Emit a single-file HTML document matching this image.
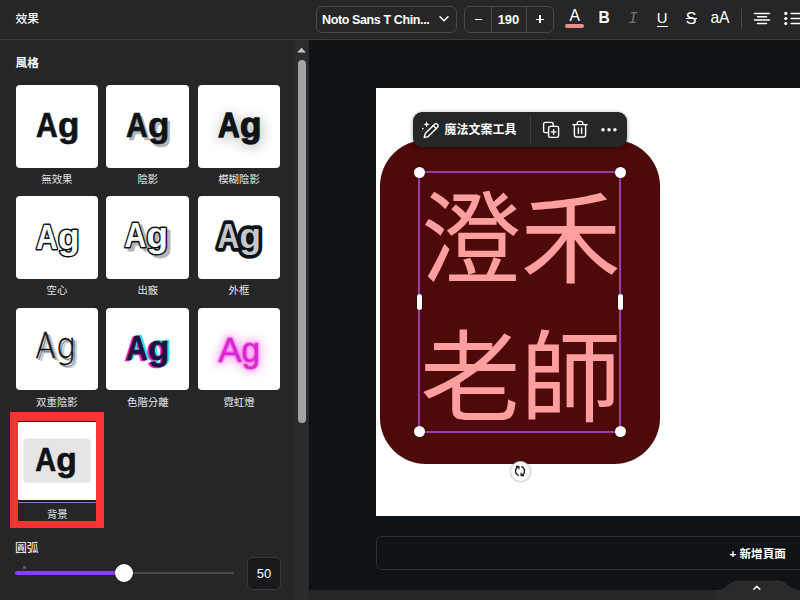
<!DOCTYPE html>
<html lang="zh-Hant">
<head>
<meta charset="utf-8">
<title>效果</title>
<style>
*{box-sizing:border-box;margin:0;padding:0}
html,body{width:800px;height:600px;overflow:hidden;background:#0e1318}
body{position:relative;font-family:"Liberation Sans","Noto Sans CJK TC",sans-serif;color:#fff}
.abs{position:absolute}
#panel{left:0;top:0;width:309px;height:600px;background:#252627}
#phead{left:0;top:0;width:309px;height:40px;border-bottom:1px solid #3a3b3d}
#phead span{position:absolute;left:15.5px;top:9px;font-size:11.8px;line-height:20px;font-weight:500;color:#fff}
.lbl{font-size:12px;line-height:16px;color:#fff;font-weight:500}
.tile{background:#fff;border-radius:4px;overflow:hidden}
.cap{width:110px;text-align:center;font-size:10.4px;line-height:14px;color:#e4e5e6}
.agb{font-family:"Liberation Sans",sans-serif;font-weight:700;font-size:35px}
.agb4{font-family:"Liberation Sans",sans-serif;font-weight:700;font-size:33.5px}
.agt{font-family:"DejaVu Sans","Liberation Sans",sans-serif;font-weight:200;font-size:35.3px}
.agn{font-family:"Liberation Sans",sans-serif;font-weight:400;font-size:36px}
#strack{left:295px;top:40px;width:13px;height:560px;background:#2b2c2e}
#sbar{left:297.5px;top:60px;width:8px;height:363px;background:#a3a3a3;border-radius:4px}
#tbar{left:308px;top:0;width:492px;height:40px;background:#252627;border-bottom:1px solid #3a3b3d}
.tb{position:absolute;top:5.5px;height:27px;border:1px solid #48494b;border-radius:6px}
.ti{position:absolute;text-align:center;color:#fff;font-family:"Liberation Sans",sans-serif;white-space:nowrap}
#page{left:376px;top:88px;width:424px;height:427.5px;background:#fff}
#shape{left:380px;top:140px;width:280px;height:324px;background:#4d0a08;border-radius:46px}
.big{position:absolute;left:420px;width:201px;font-size:100.5px;line-height:100px;color:#ff9e9e;white-space:nowrap;font-family:"Noto Sans CJK TC",sans-serif;font-weight:400;text-align:center}
#sel{left:418.3px;top:171px;width:203px;height:262px;border:2.3px solid #9a3cac}
.h{position:absolute;width:11px;height:11px;border-radius:50%;background:#fff;box-shadow:0 0 2px rgba(0,0,0,.5)}
.hp{position:absolute;width:5.6px;height:16px;border-radius:3px;background:#fff;box-shadow:0 0 2px rgba(0,0,0,.5)}
#ftb{left:413px;top:112px;width:214px;height:34.5px;background:#252627;border-radius:9px;box-shadow:0 1px 4px rgba(0,0,0,.4)}
#addbar{left:376px;top:536px;width:440px;height:34px;border:1px solid #2a3036;border-radius:6px;background:#0e1318}
#addbar span{position:absolute;left:352.5px;top:8px;font-size:11.6px;line-height:18px;font-weight:700;color:#fff;white-space:nowrap}
#bbar{left:309px;top:590px;width:491px;height:10px;background:#252627}
</style>
</head>
<body>
<!-- canvas area -->
<div class="abs" id="page"></div>
<div class="abs" id="shape"></div>
<div class="big" style="top:181px">澄禾</div>
<div class="big" style="top:320px">老師</div>
<div class="abs" id="sel"></div>
<div class="h" style="left:414px;top:166.5px"></div>
<div class="h" style="left:615px;top:166.5px"></div>
<div class="h" style="left:414px;top:426px"></div>
<div class="h" style="left:615px;top:426px"></div>
<div class="hp" style="left:416.7px;top:293.7px"></div>
<div class="hp" style="left:617.8px;top:293.7px"></div>

<!-- floating toolbar -->
<div class="abs" id="ftb">
  <svg class="abs" style="left:8px;top:8px" width="20" height="20" viewBox="0 0 20 20">
    <g fill="none" stroke="#fff" stroke-width="1.4" stroke-linejoin="round" stroke-linecap="round">
      <path d="M3.2 17.6 L4.2 13.6 L13.6 4.2 a1.9 1.9 0 0 1 2.7 0 l0.3 0.3 a1.9 1.9 0 0 1 0 2.7 L7.2 16.6 Z"/>
      <path d="M12.2 5.6 L15.2 8.6"/>
    </g>
    <path d="M5.6 1.2 L6.4 3.6 L8.8 4.4 L6.4 5.2 L5.6 7.6 L4.8 5.2 L2.4 4.4 L4.8 3.6 Z" fill="#fff"/>
    <circle cx="1.8" cy="8.6" r="0.9" fill="#fff"/>
  </svg>
  <span class="abs" style="left:31.5px;top:9.5px;font-size:12px;line-height:17px;font-weight:700;white-space:nowrap">魔法文案工具</span>
  <div class="abs" style="left:117px;top:4px;width:1px;height:27.5px;background:#3f4042"></div>
  <svg class="abs" style="left:128px;top:8px" width="20" height="20" viewBox="0 0 20 20">
    <g fill="none" stroke="#fff" stroke-width="1.4" stroke-linejoin="round" stroke-linecap="round">
      <path d="M6.8 12.6 H4.2 a1.6 1.6 0 0 1 -1.6 -1.6 V4 a1.6 1.6 0 0 1 1.6 -1.6 h6.4 a1.6 1.6 0 0 1 1.6 1.6 v1.6"/>
      <rect x="7.6" y="6.4" width="10" height="11" rx="1.7"/>
      <path d="M12.6 9.6 v4.6 M10.3 11.9 h4.6"/>
    </g>
  </svg>
  <svg class="abs" style="left:157px;top:7px" width="20" height="20" viewBox="0 0 20 20">
    <g fill="none" stroke="#fff" stroke-width="1.4" stroke-linejoin="round" stroke-linecap="round">
      <path d="M2.8 5.6 H17.2"/>
      <path d="M7.2 5.4 V4.4 a2 2 0 0 1 2 -2 h1.6 a2 2 0 0 1 2 2 V5.4"/>
      <path d="M4.4 5.8 V15.8 a2.2 2.2 0 0 0 2.2 2.2 h6.8 a2.2 2.2 0 0 0 2.2 -2.2 V5.8"/>
      <path d="M8.4 9 v5.4 M11.6 9 v5.4"/>
    </g>
  </svg>
  <svg class="abs" style="left:186px;top:14px" width="20" height="8" viewBox="0 0 20 8"><g fill="#fff"><circle cx="4" cy="3.7" r="1.75"/><circle cx="10" cy="3.7" r="1.75"/><circle cx="15.9" cy="3.7" r="1.75"/></g></svg>
</div>

<!-- rotate handle -->
<div class="abs" style="left:509.5px;top:460.5px;width:21px;height:21px;border-radius:50%;background:#fff;border:1px solid #cfd0d2;box-shadow:0 0 3px rgba(0,0,0,.15)"></div>
<svg class="abs" style="left:513px;top:463.8px" width="14" height="14" viewBox="0 0 14 14">
  <g fill="none" stroke="#1c1f24" stroke-width="1.3" stroke-linecap="round" stroke-linejoin="round">
    <path d="M5.3 11.3 A4.7 4.7 0 0 1 5.3 2.7"/><path d="M3.4 2.3 H5.9 V4.8"/>
    <path d="M8.7 2.7 A4.7 4.7 0 0 1 8.7 11.3"/><path d="M10.6 11.7 H8.1 V9.2"/>
  </g>
</svg>

<!-- add page -->
<div class="abs" id="addbar"><span>+ 新增頁面</span></div>
<div class="abs" id="bbar"></div>
<svg class="abs" style="left:716px;top:578px" width="84" height="22" viewBox="0 0 84 22"><path d="M0 12 C12 12 12 2.5 22 2.5 L62 2.5 C72 2.5 72 12 84 12 L84 22 L0 22 Z" fill="#292a2c"/><path d="M37.8 11.2 L40.8 8.2 L43.8 11.2" fill="none" stroke="#fff" stroke-width="1.4" stroke-linecap="round" stroke-linejoin="round"/></svg>

<!-- top toolbar -->
<div class="abs" id="tbar">
  <div class="tb" style="left:7.5px;width:141.5px"><span class="abs" style="left:5.5px;top:4.2px;font-size:12.5px;line-height:18px;font-weight:700;white-space:nowrap;letter-spacing:-.38px">Noto Sans T Chin...</span>
    <svg class="abs" style="left:120.5px;top:6.2px" width="14" height="12" viewBox="0 0 14 12"><path d="M3 3.8 L7 7.8 L11 3.8" fill="none" stroke="#fff" stroke-width="1.5" stroke-linecap="round" stroke-linejoin="round"/></svg>
  </div>
  <div class="tb" style="left:156px;width:90px">
    <div class="abs" style="left:25.5px;top:0;width:1px;height:25px;background:#48494b"></div>
    <div class="abs" style="left:60.5px;top:0;width:1px;height:25px;background:#48494b"></div>
    <div class="abs" style="left:9.5px;top:12px;width:7px;height:1.6px;background:#fff"></div>
    <span class="abs" style="left:26.5px;top:4px;width:34px;text-align:center;font-size:13px;line-height:18px;font-weight:700">190</span>
    <div class="abs" style="left:70.8px;top:12px;width:8px;height:1.6px;background:#fff"></div>
    <div class="abs" style="left:74px;top:8.8px;width:1.6px;height:8px;background:#fff"></div>
  </div>
  <span class="ti" style="left:255.7px;top:7.3px;width:22px;font-size:15.7px;line-height:18px">A</span>
  <div class="abs" style="left:257.2px;top:24.2px;width:18.8px;height:3.4px;border-radius:2px;background:#f08c8c"></div>
  <span class="ti" style="left:285.2px;top:9.4px;width:22px;font-size:15.6px;line-height:18px;font-weight:700">B</span>
  <span class="ti" style="left:314px;top:9.6px;width:22px;font-size:16px;line-height:18px;font-style:italic;color:#6f7073;font-family:'Liberation Mono',monospace">I</span>
  <span class="ti" style="left:343.2px;top:8.6px;width:22px;font-size:14.8px;line-height:18px">U</span>
  <div class="abs" style="left:348.5px;top:25.5px;width:11px;height:1.4px;background:#fff"></div>
  <span class="ti" style="left:372.2px;top:10px;width:22px;font-size:16px;line-height:18px">S</span>
  <div class="abs" style="left:377.5px;top:17.6px;width:11px;height:1.4px;background:#fff"></div>
  <span class="ti" style="left:397px;top:9.3px;width:30px;font-size:15.7px;line-height:18px;letter-spacing:-.2px">aA</span>
  <div class="abs" style="left:432.5px;top:8.5px;width:1px;height:20px;background:#46474a"></div>
  <svg class="abs" style="left:444px;top:10px" width="48" height="18" viewBox="0 0 48 18">
    <g stroke="#fff" stroke-width="1.5" stroke-linecap="round"><path d="M2.5 3.4H17.5M5.5 6.75H14.5M2.5 10.1H17.5M5.5 13.5H14.5"/><path d="M39.2 3.4H48M39.2 8.5H48M39.2 13.5H48"/></g>
    <g fill="#fff"><circle cx="33.8" cy="3.4" r="1.6"/><circle cx="33.8" cy="8.5" r="1.6"/><circle cx="33.8" cy="13.5" r="1.6"/></g>
  </svg>
</div>

<!-- left panel -->
<div class="abs" id="panel">
  <div class="abs" id="phead"><span>效果</span></div>
  <div class="abs lbl" style="left:15.5px;top:54.5px;font-weight:700;font-size:11.7px">風格</div>
  <div class="abs" id="strack"></div>
  <div class="abs" id="sbar"></div>
  <svg class="abs" style="left:296px;top:47px" width="11" height="7" viewBox="0 0 11 7"><path d="M1 5.5 L5.5 0.8 L10 5.5 Z" fill="#c4c4c4"/></svg>
  <svg class="abs tile" style="left:15.5px;top:85px" width="82.8" height="82.8" viewBox="0 0 82.8 82.8"><text y="52.2" class="agb" fill="#0e1318" stroke="#0e1318" stroke-width=".7"><tspan x="20" textLength="21.7" lengthAdjust="spacingAndGlyphs">A</tspan><tspan x="42" textLength="21.4" lengthAdjust="spacingAndGlyphs">g</tspan></text></svg>
  <svg class="abs tile" style="left:106.4px;top:85px" width="82.8" height="82.8" viewBox="0 0 82.8 82.8"><text y="54.7" class="agb" fill="#b5b5b6" stroke="#b5b5b6" stroke-width=".7"><tspan x="22.5" textLength="21.7" lengthAdjust="spacingAndGlyphs">A</tspan><tspan x="44.5" textLength="21.4" lengthAdjust="spacingAndGlyphs">g</tspan></text><text y="52.2" class="agb" fill="#0e1318" stroke="#0e1318" stroke-width=".7"><tspan x="20" textLength="21.7" lengthAdjust="spacingAndGlyphs">A</tspan><tspan x="42" textLength="21.4" lengthAdjust="spacingAndGlyphs">g</tspan></text></svg>
  <svg class="abs tile" style="left:197.6px;top:85px" width="82.8" height="82.8" viewBox="0 0 82.8 82.8"><defs><filter id="bl" x="-60%" y="-60%" width="220%" height="220%"><feGaussianBlur stdDeviation="6.5"/></filter></defs><text y="54.2" class="agb" fill="#0e1318" stroke="#0e1318" stroke-width="2" filter="url(#bl)" opacity=".3"><tspan x="21" textLength="21.7" lengthAdjust="spacingAndGlyphs">A</tspan><tspan x="43" textLength="21.4" lengthAdjust="spacingAndGlyphs">g</tspan></text><text y="52.2" class="agb" fill="#0e1318" stroke="#0e1318" stroke-width="1.3" stroke-linejoin="round"><tspan x="20" textLength="21.7" lengthAdjust="spacingAndGlyphs">A</tspan><tspan x="42" textLength="21.4" lengthAdjust="spacingAndGlyphs">g</tspan></text></svg>
  <div class="abs cap" style="left:1.9px;top:172.8px">無效果</div><div class="abs cap" style="left:92.8px;top:172.8px">陰影</div><div class="abs cap" style="left:184px;top:172.8px">模糊陰影</div>
  <svg class="abs tile" style="left:15.5px;top:196.3px" width="82.8" height="82.8" viewBox="0 0 82.8 82.8"><text y="52.7" class="agb" fill="#fff" stroke="#0e1318" stroke-width="3.1" stroke-linejoin="round" paint-order="stroke"><tspan x="20" textLength="21.7" lengthAdjust="spacingAndGlyphs">A</tspan><tspan x="42" textLength="21.4" lengthAdjust="spacingAndGlyphs">g</tspan></text></svg>
  <svg class="abs tile" style="left:106.4px;top:196.3px" width="82.8" height="82.8" viewBox="0 0 82.8 82.8"><defs><filter id="sb" x="-20%" y="-20%" width="140%" height="140%"><feGaussianBlur stdDeviation=".5"/></filter></defs><text y="54.2" class="agb" fill="#b3b4b7" stroke="#b3b4b7" stroke-width="3.1" stroke-linejoin="round" filter="url(#sb)"><tspan x="22" textLength="21.7" lengthAdjust="spacingAndGlyphs">A</tspan><tspan x="44" textLength="21.4" lengthAdjust="spacingAndGlyphs">g</tspan></text><text y="50.7" class="agb" fill="#fff" stroke="#0e1318" stroke-width="3.1" stroke-linejoin="round" paint-order="stroke"><tspan x="18.5" textLength="21.7" lengthAdjust="spacingAndGlyphs">A</tspan><tspan x="40.5" textLength="21.4" lengthAdjust="spacingAndGlyphs">g</tspan></text></svg>
  <svg class="abs tile" style="left:197.6px;top:196.3px" width="82.8" height="82.8" viewBox="0 0 82.8 82.8"><text y="51.7" class="agb" fill="#c5c7ca" stroke="#0e1318" stroke-width="7.4" stroke-linejoin="round" paint-order="stroke"><tspan x="19.6" textLength="21.7" lengthAdjust="spacingAndGlyphs">A</tspan><tspan x="41.6" textLength="21.4" lengthAdjust="spacingAndGlyphs">g</tspan></text></svg>
  <div class="abs cap" style="left:1.9px;top:284.2px">空心</div><div class="abs cap" style="left:92.8px;top:284.2px">出竅</div><div class="abs cap" style="left:184px;top:284.2px">外框</div>
  <svg class="abs tile" style="left:15.5px;top:307.6px" width="82.8" height="82.8" viewBox="0 0 82.8 82.8"><text y="53.4" class="agt" fill="#c9cacc"><tspan x="23.2" textLength="20.4" lengthAdjust="spacingAndGlyphs">A</tspan><tspan x="44" textLength="19.4" lengthAdjust="spacingAndGlyphs">g</tspan></text><text y="51.9" class="agt" fill="#8d8f92"><tspan x="21.2" textLength="20.4" lengthAdjust="spacingAndGlyphs">A</tspan><tspan x="42" textLength="19.4" lengthAdjust="spacingAndGlyphs">g</tspan></text><text y="50.4" class="agt" fill="#0e1318" stroke="#0e1318" stroke-width=".35"><tspan x="19.2" textLength="20.4" lengthAdjust="spacingAndGlyphs">A</tspan><tspan x="40" textLength="19.4" lengthAdjust="spacingAndGlyphs">g</tspan></text></svg>
  <svg class="abs tile" style="left:106.4px;top:307.6px" width="82.8" height="82.8" viewBox="0 0 82.8 82.8"><text y="53.4" class="agb" fill="#e326e0" stroke="#e326e0" stroke-width=".7"><tspan x="18.3" textLength="21.7" lengthAdjust="spacingAndGlyphs">A</tspan><tspan x="40.3" textLength="21.4" lengthAdjust="spacingAndGlyphs">g</tspan></text><text y="51" class="agb" fill="#35e0e0" stroke="#35e0e0" stroke-width=".7"><tspan x="21.7" textLength="21.7" lengthAdjust="spacingAndGlyphs">A</tspan><tspan x="43.7" textLength="21.4" lengthAdjust="spacingAndGlyphs">g</tspan></text><text y="52.2" class="agb" fill="#23103f" stroke="#23103f" stroke-width=".7"><tspan x="20" textLength="21.7" lengthAdjust="spacingAndGlyphs">A</tspan><tspan x="42" textLength="21.4" lengthAdjust="spacingAndGlyphs">g</tspan></text></svg>
  <svg class="abs tile" style="left:197.6px;top:307.6px" width="82.8" height="82.8" viewBox="0 0 82.8 82.8"><defs><filter id="nb" x="-60%" y="-60%" width="220%" height="220%"><feGaussianBlur stdDeviation="5"/></filter><filter id="nb2" x="-50%" y="-50%" width="200%" height="200%"><feGaussianBlur stdDeviation="1.3"/></filter></defs><text y="53.8" class="agn" fill="#f47dea" filter="url(#nb)" stroke="#f47dea" stroke-width="5" opacity=".68"><tspan x="20.3" textLength="23.4" lengthAdjust="spacingAndGlyphs">A</tspan><tspan x="43.4" textLength="18.6" lengthAdjust="spacingAndGlyphs">g</tspan></text><text y="53.8" class="agn" fill="#e83fe0" stroke="#e83fe0" stroke-width="1" filter="url(#nb2)"><tspan x="20.3" textLength="23.4" lengthAdjust="spacingAndGlyphs">A</tspan><tspan x="43.4" textLength="18.6" lengthAdjust="spacingAndGlyphs">g</tspan></text><text y="53.8" class="agn" fill="#d926cf"><tspan x="20.3" textLength="23.4" lengthAdjust="spacingAndGlyphs">A</tspan><tspan x="43.4" textLength="18.6" lengthAdjust="spacingAndGlyphs">g</tspan></text></svg>
  <div class="abs cap" style="left:1.9px;top:395.6px">双重陰影</div><div class="abs cap" style="left:92.8px;top:395.6px">色階分離</div><div class="abs cap" style="left:184px;top:395.6px">霓虹燈</div>
  <div class="abs" style="left:14px;top:418.8px;width:86px;height:84.6px;border:1.6px solid #8f74d9;border-radius:6px;background:#1a1b1d"></div>
  <div class="abs" style="left:16.5px;top:422px;width:81px;height:77.5px;border-radius:3px;background:#fff"></div>
  <svg class="abs" style="left:15px;top:420px" width="84" height="83" viewBox="0 0 84 83"><rect x="8.3" y="18.5" width="67.2" height="44.3" rx="4" fill="#e5e5e6"/><text y="51.2" class="agb4" fill="#0e1318" stroke="#0e1318" stroke-width=".7"><tspan x="20.3" textLength="20.8" lengthAdjust="spacingAndGlyphs">A</tspan><tspan x="41.2" textLength="20.5" lengthAdjust="spacingAndGlyphs">g</tspan></text></svg>
  <div class="abs cap" style="left:2.3px;top:507.8px">背景</div>
  <div class="abs" style="left:9.6px;top:411.8px;width:94.4px;height:116.3px;border:solid #f83334;border-width:9.1px 8px 7.6px 8px"></div>
  <!-- slider -->
  <div class="abs lbl" style="left:15px;top:539.5px;font-weight:400;font-size:11.8px">圓弧</div>
  <div class="abs" style="left:23.4px;top:566.4px;width:2.6px;height:2.6px;border-radius:50%;background:#5f6063"></div>
  <div class="abs" style="left:15px;top:571.7px;width:219px;height:2.6px;border-radius:1.3px;background:#4a4b4e"></div>
  <div class="abs" style="left:15px;top:571.2px;width:109px;height:3.6px;border-radius:2px;background:#8b3dff"></div>
  <div class="abs" style="left:115px;top:564px;width:18px;height:18px;border-radius:50%;background:#fff;box-shadow:0 0 2px rgba(0,0,0,.5)"></div>
  <div class="abs" style="left:247px;top:556.5px;width:34px;height:33.5px;border:1px solid #37383b;border-radius:5px;background:#18191b;text-align:center;font-size:13px;line-height:31.5px;font-weight:400">50</div>
</div>
</body>
</html>
